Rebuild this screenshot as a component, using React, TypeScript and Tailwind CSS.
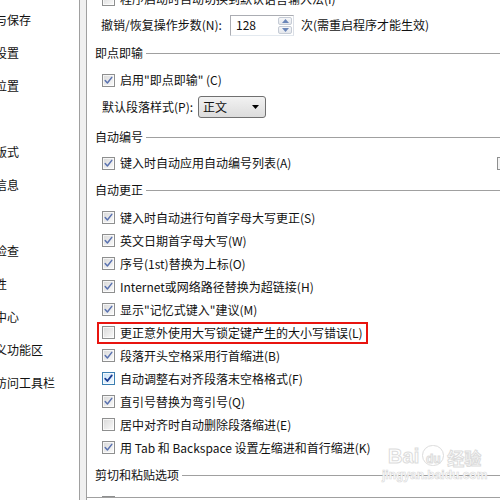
import type { ReactNode } from "react";

const sideItems = ["与保存", "设置", "位置", "", "版式", "信息", "", "检查", "性", "中心", "义功能区", "访问工具栏"];

function CheckBox({ checked, hot }: { checked?: boolean; hot?: boolean }) {
  return (
    <span
      className={`relative flex h-[13px] w-[13px] shrink-0 items-center justify-center border ${
        hot
          ? "border-[#3c7fb1] bg-gradient-to-br from-[#c7e2f7] to-[#f4f9fd]"
          : "border-[#8e8f8f] bg-gradient-to-br from-[#d8d8d8] to-[#fbfbfb]"
      }`}
    >
      <span className="absolute inset-0 border border-white/70" />
      {checked && (
        <svg viewBox="0 0 11 11" className="relative h-[11px] w-[11px]">
          <path
            d="M2.2 5.6 L4.4 8 L8.8 2.4"
            fill="none"
            stroke={hot ? "#1b3d96" : "#5a72b0"}
            strokeWidth={hot ? 1.8 : 1.5}
            strokeLinecap="round"
            strokeLinejoin="round"
          />
        </svg>
      )}
    </span>
  );
}

function Row({
  label,
  checked = true,
  hot,
  className = "h-[23px]",
  children,
}: {
  label: string;
  checked?: boolean;
  hot?: boolean;
  className?: string;
  children?: ReactNode;
}) {
  return (
    <div className={`flex items-center gap-[5px] pl-[15px] ${className}`}>
      <CheckBox checked={checked} hot={hot} />
      <span className="whitespace-nowrap">{label}</span>
      {children}
    </div>
  );
}

function Section({ title, className }: { title: string; className: string }) {
  return (
    <div className={`flex items-center pl-[8px] ${className}`}>
      <span className="whitespace-nowrap">{title}</span>
      <span className="ml-[3px] h-px flex-1 bg-[#a0a0a0]" />
    </div>
  );
}

function SpinBox() {
  return (
    <div className="ml-[7px] flex h-[21px] w-[64px] items-center justify-between border border-[#abadb3] border-b-[#e3e9ef] border-r-[#dbdfe6] bg-white pl-[5px] pr-[1px]">
      <span>128</span>
      <div className="flex h-[17px] w-[14px] flex-col gap-px">
        <span className="flex flex-1 items-center justify-center rounded-[2px] border border-[#c5cbd5] bg-gradient-to-b from-[#f6f7f9] to-[#e4e7ec]">
          <svg viewBox="0 0 7 4" className="h-[4px] w-[7px]">
            <path d="M0 4 L3.5 0 L7 4 Z" fill="#6b86b8" />
          </svg>
        </span>
        <span className="flex flex-1 items-center justify-center rounded-[2px] border border-[#c5cbd5] bg-gradient-to-b from-[#f6f7f9] to-[#e4e7ec]">
          <svg viewBox="0 0 7 4" className="h-[4px] w-[7px]">
            <path d="M0 0 L3.5 4 L7 0 Z" fill="#6b86b8" />
          </svg>
        </span>
      </div>
    </div>
  );
}

function Select() {
  return (
    <div className="ml-[6px] flex h-[22px] w-[68px] items-center justify-between rounded-[3px] border border-[#707070] bg-gradient-to-b from-[#f2f2f2] to-[#dcdcdc] pl-[4px] pr-[6px]">
      <span>正文</span>
      <svg viewBox="0 0 7 4" className="h-[4px] w-[7px]">
        <path d="M0 0 L3.5 4 L7 0 Z" fill="#000" />
      </svg>
    </div>
  );
}

export default function App() {
  return (
    <div className="relative flex h-[500px] w-[500px] overflow-hidden bg-white font-['Microsoft_YaHei','Noto_Sans_CJK_SC',sans-serif] text-[12px] text-[#111]">
      <aside className="w-[80px] shrink-0 overflow-hidden border-r border-[#a0a0a0] pt-[3px]">
        {sideItems.map((item, i) => (
          <div key={i} className="ml-[-5px] flex h-[33px] items-center whitespace-nowrap">
            {item}
          </div>
        ))}
      </aside>
      <div className="w-[7px] shrink-0 border-r border-[#a0a0a0] bg-[#f0f0f0]" />
      <main className="h-[498px] flex-1 overflow-hidden border-b border-[#a0a0a0]">
        <div className="mt-[-14px]">
          <Row label="程序启动时自动切换到默认语言输入法(I)" checked={false} className="h-[26px]" />
          <div className="flex h-[26px] items-center pl-[14px]">
            <span className="w-[122px] whitespace-nowrap">撤销/恢复操作步数(N):</span>
            <SpinBox />
            <span className="ml-[7px] whitespace-nowrap">次(需重启程序才能生效)</span>
          </div>
          <Section title="即点即输" className="h-[30px]" />
          <Row label={"启用\"即点即输\" (C)"} className="h-[24px]" />
          <div className="flex h-[30px] items-center pl-[15px]">
            <span className="w-[90px] whitespace-nowrap">默认段落样式(P):</span>
            <Select />
          </div>
          <Section title="自动编号" className="h-[30px]" />
          <div className="flex h-[22px] items-center">
            <Row label="键入时自动应用自动编号列表(A)" className="h-[22px]" />
            <span className="ml-auto mr-[-10px] h-[13px] w-[13px] border border-[#8e8f8f] bg-[#f4f4f4]" />
          </div>
          <Section title="自动更正" className="h-[32px]" />
          <Row label="键入时自动进行句首字母大写更正(S)" />
          <Row label="英文日期首字母大写(W)" />
          <Row label="序号(1st)替换为上标(O)" />
          <Row label="Internet或网络路径替换为超链接(H)" />
          <Row label={"显示\"记忆式键入\"建议(M)"} />
          <div className="flex h-[23px] items-center pl-[10px]">
            <div className="flex h-[22px] w-[271px] items-center gap-[5px] border-2 border-[#e8140f] pl-[3px]">
              <CheckBox />
              <span className="whitespace-nowrap">更正意外使用大写锁定键产生的大小写错误(L)</span>
            </div>
          </div>
          <Row label="段落开头空格采用行首缩进(B)" />
          <Row label="自动调整右对齐段落末空格格式(F)" hot />
          <Row label="直引号替换为弯引号(Q)" />
          <Row label="居中对齐时自动删除段落缩进(E)" checked={false} />
          <Row label="用 Tab 和 Backspace 设置左缩进和首行缩进(K)" />
          <Section title="剪切和粘贴选项" className="h-[32px]" />
          <Row label="显示粘贴选项按钮" checked={false} />
        </div>
      </main>
      <div className="pointer-events-none absolute left-[382px] top-[445px] flex flex-col items-center text-white">
        <div className="flex items-end gap-[3px] font-['Liberation_Sans',sans-serif] text-[20px] font-bold leading-none [-webkit-text-stroke:1px_#dcdcdc]">
          <span>Bai</span>
          <span className="flex h-[21px] w-[22px] items-end justify-center rounded-full border border-[#dcdcdc] text-[12px]">du</span>
          <span className="font-['Noto_Sans_CJK_SC',sans-serif] text-[17px]">经验</span>
        </div>
        <span className="mt-[3px] font-['Liberation_Sans',sans-serif] text-[12px] font-bold leading-none [-webkit-text-stroke:0.6px_#d8d8d8]">
          jingyan.baidu.com
        </span>
      </div>
    </div>
  );
}
